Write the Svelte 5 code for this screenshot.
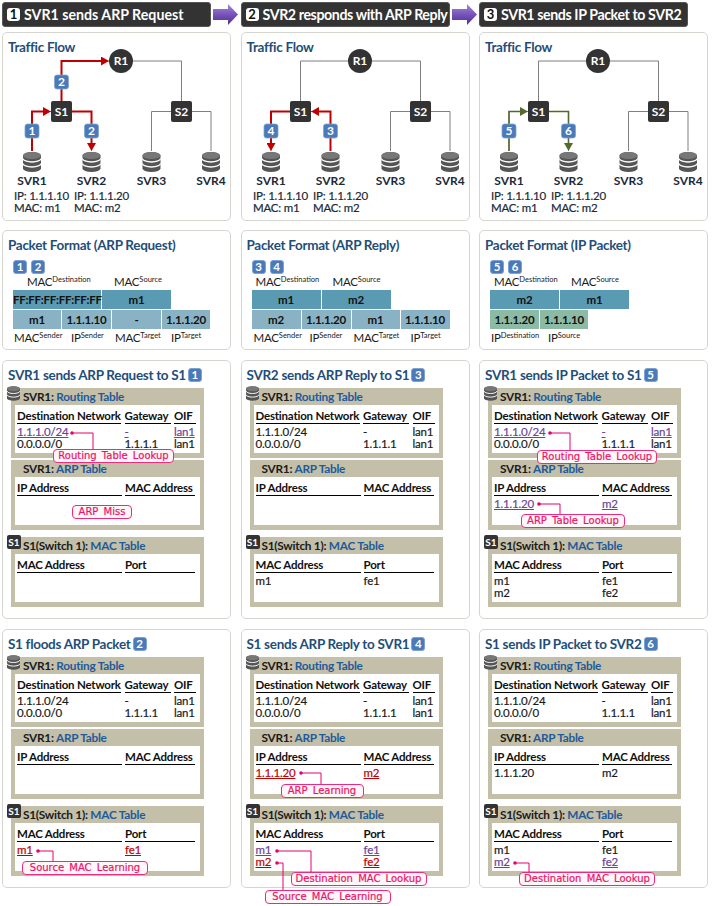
<script>
  const routes = [
    ['1.1.1.0/24', '-', 'lan1'],
    ['0.0.0.0/0', '1.1.1.1', 'lan1'],
  ];
  const hit = (t) => ({ t, c: 'hit' });
  const learned = (t) => ({ t, c: 'learned' });

  const grayLinks = [
    'M59.5 69V29H119',
    'M119 29H179.5V69',
    'M30 119V79.5H89.5V119',
    'M149.5 119V79.5H209V119',
  ];
  const servers = [
    { name: 'SVR1', x: 30, ip: '1.1.1.10', mac: 'm1', tx: 12 },
    { name: 'SVR2', x: 89.5, ip: '1.1.1.20', mac: 'm2', tx: 72 },
    { name: 'SVR3', x: 149.5 },
    { name: 'SVR4', x: 209 },
  ];

  const cols = [
    {
      step: 1,
      head: 'SVR1 sends ARP Request',
      track: 0,
      color: '#c00000',
      stroke: 2,
      flows: ['M30 119V79.5H46', 'M70 79.5H89.5V116', 'M59.5 69V29H104'],
      marks: [
        { n: 1, x: 30, y: 99 },
        { n: 2, x: 89.5, y: 99 },
        { n: 2, x: 59.5, y: 50 },
      ],
      packet: {
        title: 'Packet Format (ARP Request)',
        steps: [1, 2],
        top: [
          { t: 'FF:FF:FF:FF:FF:FF', w: 88 },
          { t: 'm1', w: 69 },
        ],
        topLabels: [
          { a: 'MAC', b: 'Destination', w: 87, x: 14 },
          { a: 'MAC', b: 'Source', w: 80 },
        ],
        bottom: [
          { t: 'm1', w: 48 },
          { t: '1.1.1.10', w: 49 },
          { t: '-', w: 49 },
          { t: '1.1.1.20', w: 48 },
        ],
        bottomLabels: [
          { a: 'MAC', b: 'Sender', w: 57, x: 1 },
          { a: 'IP', b: 'Sender', w: 44 },
          { a: 'MAC', b: 'Target', w: 56 },
          { a: 'IP', b: 'Target', w: 40 },
        ],
      },
      details: [
        {
          title: 'SVR1 sends ARP Request to S1',
          step: 1,
          routes: [[hit('1.1.1.0/24'), hit('-'), hit('lan1')], routes[1]],
          arp: [],
          mac: [],
          notes: [
            { t: 'Routing Table Lookup', x: 51, y: 89, w: 121, dx: 70, dy: 73, bend: 91 },
            { t: 'ARP Miss', x: 70, y: 145, w: 60 },
          ],
        },
        {
          title: 'S1 floods ARP Packet',
          step: 2,
          routes,
          arp: [],
          mac: [[learned('m1'), learned('fe1')]],
          notes: [
            { t: 'Source MAC Learning', x: 20, y: 232, w: 126, dx: 36, dy: 222, bend: 51 },
          ],
        },
      ],
    },
    {
      step: 2,
      head: 'SVR2 responds with ARP Reply',
      track: -0.4,
      color: '#c00000',
      stroke: 2,
      flows: ['M89.5 119V79.5H73', 'M49 79.5H30V116'],
      marks: [
        { n: 4, x: 30, y: 99 },
        { n: 3, x: 89.5, y: 99 },
      ],
      packet: {
        title: 'Packet Format (ARP Reply)',
        steps: [3, 4],
        top: [
          { t: 'm1', w: 69 },
          { t: 'm2', w: 69 },
        ],
        topLabels: [
          { a: 'MAC', b: 'Destination', w: 77, x: 4 },
          { a: 'MAC', b: 'Source', w: 80 },
        ],
        bottom: [
          { t: 'm2', w: 49 },
          { t: '1.1.1.20', w: 49 },
          { t: 'm1', w: 48 },
          { t: '1.1.1.10', w: 49 },
        ],
        bottomLabels: [
          { a: 'MAC', b: 'Sender', w: 56, x: 2 },
          { a: 'IP', b: 'Sender', w: 44 },
          { a: 'MAC', b: 'Target', w: 57 },
          { a: 'IP', b: 'Target', w: 40 },
        ],
      },
      details: [
        {
          title: 'SVR2 sends ARP Reply to S1',
          step: 3,
          routes,
          arp: [],
          mac: [['m1', 'fe1']],
          notes: [],
        },
        {
          title: 'S1 sends ARP Reply to SVR1',
          step: 4,
          routes,
          arp: [[learned('1.1.1.20'), learned('m2')]],
          mac: [
            [hit('m1'), hit('fe1')],
            [learned('m2'), learned('fe2')],
          ],
          notes: [
            { t: 'ARP Learning', x: 40, y: 155, w: 83, dx: 60, dy: 144, bend: 80 },
            { t: 'Source MAC Learning', x: 24, y: 261, w: 126, dx: 36, dy: 234, bend: 42 },
            { t: 'Destination MAC Lookup', x: 50, y: 243, w: 136, dx: 36, dy: 222, bend: 70 },
          ],
        },
      ],
    },
    {
      step: 3,
      head: 'SVR1 sends IP Packet to SVR2',
      track: -0.4,
      color: '#56692c',
      stroke: 1.6,
      flows: ['M30 119V79.5H46', 'M70 79.5H89.5V116'],
      marks: [
        { n: 5, x: 30, y: 99 },
        { n: 6, x: 89.5, y: 99 },
      ],
      packet: {
        title: 'Packet Format (IP Packet)',
        steps: [5, 6],
        top: [
          { t: 'm2', w: 69 },
          { t: 'm1', w: 69 },
        ],
        topLabels: [
          { a: 'MAC', b: 'Destination', w: 77, x: 4 },
          { a: 'MAC', b: 'Source', w: 80 },
        ],
        bottom: [
          { t: '1.1.1.20', w: 49, ip: true },
          { t: '1.1.1.10', w: 48, ip: true },
        ],
        bottomLabels: [
          { a: 'IP', b: 'Destination', w: 57, x: 1 },
          { a: 'IP', b: 'Source', w: 50 },
        ],
      },
      details: [
        {
          title: 'SVR1 sends IP Packet to S1',
          step: 5,
          routes: [[hit('1.1.1.0/24'), hit('-'), hit('lan1')], routes[1]],
          arp: [[hit('1.1.1.20'), hit('m2')]],
          mac: [
            ['m1', 'fe1'],
            ['m2', 'fe2'],
          ],
          notes: [
            { t: 'Routing Table Lookup', x: 58, y: 90, w: 120, dx: 71, dy: 73, bend: 91 },
            { t: 'ARP Table Lookup', x: 42, y: 154, w: 104, dx: 60, dy: 144, bend: 81 },
          ],
        },
        {
          title: 'S1 sends IP Packet to SVR2',
          step: 6,
          routes,
          arp: [['1.1.1.20', 'm2']],
          mac: [
            ['m1', 'fe1'],
            [hit('m2'), hit('fe2')],
          ],
          notes: [
            { t: 'Destination MAC Lookup', x: 40, y: 243, w: 136, dx: 36, dy: 234, bend: 50 },
          ],
        },
      ],
    },
  ];
</script>

{#snippet dbShape()}
  <path d="M0 3.5a9 3.5 0 0 1 18 0v13a9 3.5 0 0 1-18 0z" fill="#555" />
  <ellipse cx="9" cy="3.5" rx="9" ry="3.5" fill="#777" />
  <path d="M0 6.5a9 3.5 0 0 0 18 0M0 11.5a9 3.5 0 0 0 18 0" fill="none" stroke="#fff" stroke-width="1.3" />
{/snippet}

{#snippet badge(n)}
  <span class="badge">{n}</span>
{/snippet}

{#snippet grid(kind, head, rows)}
  <div class="tbl {kind}">
    {#each head as h}
      <div class="th">{h}</div>
    {/each}
    {#each rows as row}
      {#each row as cell}
        {#if typeof cell === 'string'}
          <div class="td">{cell}</div>
        {:else}
          <div class="td"><span class={cell.c}>{cell.t}</span></div>
        {/if}
      {/each}
    {/each}
  </div>
{/snippet}

{#snippet labels(list)}
  <div class="plabels">
    {#each list as l}
      <span class="plabel" style="width:{l.w}px;margin-left:{l.x ?? 0}px">{l.a}<sup>{l.b}</sup></span>
    {/each}
  </div>
{/snippet}

<div class="page">
  {#each cols as col, ci}
    <section class="col">
      <div class="top">
        <header class="head"><span class="head-num">{col.step}</span><span style="letter-spacing:{col.track}px">{col.head}</span></header>
        {#if ci < 2}
          <svg class="next" width="26" height="24" viewBox="0 0 26 24">
            <defs>
              <linearGradient id="arrow-{ci}" x1="0" y1="0" x2="0" y2="1">
                <stop offset="0" stop-color="#a48bd6" />
                <stop offset="0.45" stop-color="#7a58bd" />
                <stop offset="1" stop-color="#4d2f91" />
              </linearGradient>
            </defs>
            <path d="M0 6h15V1l10 10.5L15 22v-5H0z" fill="url(#arrow-{ci})" />
          </svg>
        {/if}
      </div>

      <div class="card flow">
        <h2>Traffic Flow</h2>
        <svg class="topo" width="227" height="187" viewBox="1 1 227 187">
          <defs>
            <marker id="tip-{ci}" markerUnits="userSpaceOnUse" markerWidth="8" markerHeight="9" refX="5" refY="4.5" orient="auto">
              <path d="M0 0L8 4.5L0 9z" fill={col.color} />
            </marker>
          </defs>
          {#each grayLinks as d}
            <path {d} class="link" />
          {/each}
          {#each col.flows as d}
            <path {d} fill="none" stroke={col.color} stroke-width={col.stroke} marker-end="url(#tip-{ci})" />
          {/each}

          <circle cx="119" cy="29" r="12" fill="#333" />
          <text x="119" y="33" class="node">R1</text>
          <rect x="49" y="69" width="21" height="21" rx="2" fill="#333" />
          <text x="59.5" y="84" class="node">S1</text>
          <rect x="169" y="69" width="21" height="21" rx="2" fill="#333" />
          <text x="179.5" y="84" class="node">S2</text>

          {#each col.marks as m}
            <rect x={m.x - 7} y={m.y - 7} width="14" height="14" rx="2.5" fill="#4a7ab8" stroke="#7ea3d3" stroke-width="0.8" />
            <text x={m.x} y={m.y + 4.2} class="mark">{m.n}</text>
          {/each}

          {#each servers as s}
            <g transform="translate({s.x - 9} 120)">{@render dbShape()}</g>
            <text x={s.x} y="153" class="svr">{s.name}</text>
            {#if s.ip}
              <text x={s.tx} y="168" class="addr">IP: {s.ip}</text>
              <text x={s.tx} y="180" class="addr">MAC: {s.mac}</text>
            {/if}
          {/each}
        </svg>
      </div>

      <div class="card packet">
        <h2>{col.packet.title}</h2>
        <div class="pbadges">
          {#each col.packet.steps as n}
            {@render badge(n)}
          {/each}
        </div>
        {@render labels(col.packet.topLabels)}
        <div class="cells">
          {#each col.packet.top as c}
            <div class="cell mac" style="width:{c.w}px">{c.t}</div>
          {/each}
        </div>
        <div class="cells">
          {#each col.packet.bottom as c}
            <div class="cell" class:ip={c.ip} style="width:{c.w}px">{c.t}</div>
          {/each}
        </div>
        {@render labels(col.packet.bottomLabels)}
      </div>

      {#each col.details as d}
        <div class="card detail">
          <h2>{d.title}{@render badge(d.step)}</h2>

          <div class="panel">
            <svg class="panel-icon" width="13" height="15" viewBox="0 0 18 20">{@render dbShape()}</svg>
            <h3>SVR1: <em>Routing Table</em></h3>
            <div class="sheet">
              {@render grid('three', ['Destination Network', 'Gateway', 'OIF'], d.routes)}
            </div>
          </div>

          <div class="panel arp">
            <h3>SVR1: <em>ARP Table</em></h3>
            <div class="sheet">
              {@render grid('two', ['IP Address', 'MAC Address'], d.arp)}
            </div>
          </div>

          <div class="panel mac-panel">
            <span class="s1-icon">S1</span>
            <h3>S1(Switch 1): <em>MAC Table</em></h3>
            <div class="sheet">
              {@render grid('two', ['MAC Address', 'Port'], d.mac)}
            </div>
          </div>

          {#each d.notes as note}
            {#if note.bend}
              <svg class="leader" width="229" height="280" viewBox="0 0 229 280">
                <path d="M{note.dx} {note.dy}H{note.bend}V{note.y}" fill="none" stroke="#e6006e" stroke-width="1" />
                <circle cx={note.dx} cy={note.dy} r="1.8" fill="#e6006e" />
              </svg>
            {/if}
            <div class="note" style="left:{note.x}px;top:{note.y}px;width:{note.w}px">{note.t}</div>
          {/each}
        </div>
      {/each}
    </section>
  {/each}
</div>

<style>
  :global(body) {
    background: #fff;
    color: #111;
    font-family: Lato, "Liberation Sans", sans-serif;
  }

  .page {
    display: grid;
    grid-template-columns: repeat(3, 229px);
    column-gap: 9.5px;
    align-content: start;
    min-height: 904px;
    padding: 2px 0 0 2px;
  }

  .col {
    display: flex;
    flex-direction: column;
    min-width: 0;
  }

  .top {
    display: flex;
    align-items: center;
    gap: 2px;
    height: 25px;
  }

  .head {
    flex: 0 0 209px;
    box-sizing: border-box;
    height: 25px;
    display: flex;
    align-items: center;
    gap: 4px;
    padding-left: 4px;
    background: #333;
    border: 1px solid #555;
    border-radius: 3px;
    color: #fff;
    font-size: 14.2px;
    font-weight: 700;
    white-space: nowrap;
  }

  .head-num {
    width: 13px;
    height: 13px;
    border-radius: 3px;
    background: #fff;
    color: #111;
    font-size: 13px;
    line-height: 13px;
    text-align: center;
  }

  .next {
    flex-shrink: 0;
  }

  .card {
    position: relative;
    box-sizing: border-box;
    border: 1px solid #d6d6d0;
    border-radius: 5px;
    background: #fff;
  }

  .flow {
    height: 189px;
    margin-top: 5px;
    display: grid;
  }

  .flow > * {
    grid-area: 1 / 1;
  }

  .packet {
    height: 120px;
    margin-top: 9px;
  }

  .detail {
    height: 259px;
    margin-top: 10px;
  }

  h2 {
    margin: 0;
    padding: 5px 0 0 5px;
    font-size: 13.5px;
    letter-spacing: -0.3px;
    line-height: 18px;
    font-weight: 700;
    color: #1f4e79;
    white-space: nowrap;
  }

  .topo text {
    font-family: Lato, "Liberation Sans", sans-serif;
  }

  .link {
    fill: none;
    stroke: #7f7f7f;
    stroke-width: 1;
  }

  .node {
    fill: #fff;
    font-size: 12px;
    font-weight: 700;
    text-anchor: middle;
  }

  .mark {
    fill: #fff;
    font-size: 12px;
    font-weight: 700;
    text-anchor: middle;
  }

  .svr {
    fill: #1a2a3a;
    font-size: 12px;
    font-weight: 700;
    text-anchor: middle;
  }

  .addr {
    fill: #1a2a3a;
    font-size: 11.5px;
    letter-spacing: -0.2px;
    stroke: #1a2a3a;
    stroke-width: 0.2px;
  }

  .badge {
    display: inline-block;
    box-sizing: border-box;
    width: 14px;
    height: 14px;
    margin-left: 2px;
    border-radius: 3px;
    background: #4a7ab8;
    border: 1px solid #7ea3d3;
    color: #fff;
    font-size: 11.5px;
    letter-spacing: 0;
    line-height: 12px;
    font-weight: 700;
    text-align: center;
    vertical-align: 1px;
  }

  .pbadges {
    display: flex;
    gap: 2px;
    height: 14px;
    margin: 6px 0 0 8px;
  }

  .plabels {
    display: flex;
    margin-left: 10px;
    height: 16px;
    font-size: 11.5px;
    letter-spacing: -0.2px;
    line-height: 16px;
    color: #1a1a1a;
    white-space: nowrap;
  }

  .plabel sup {
    font-size: 7.5px;
    letter-spacing: 0;
    line-height: 0;
    vertical-align: 4px;
  }

  .cells {
    display: flex;
    gap: 1px;
    margin: 0 0 1px 10px;
  }

  .cell {
    height: 19px;
    flex-shrink: 0;
    background: #8ab2c5;
    color: #111;
    font-size: 11.5px;
    letter-spacing: -0.2px;
    line-height: 19px;
    font-weight: 700;
    text-align: center;
    white-space: nowrap;
  }

  .cell.mac {
    background: #5b9ab3;
  }

  .cell.ip {
    background: #8cbaa5;
  }

  .panel {
    position: relative;
    box-sizing: border-box;
    width: 193px;
    height: 70px;
    margin: 4px 0 0 8px;
    padding: 0 4px;
    background: #c3bfa9;
  }

  .arp {
    margin-top: 2px;
  }

  .mac-panel {
    margin-top: 7px;
  }

  .panel-icon {
    position: absolute;
    left: -4px;
    top: -2px;
  }

  .s1-icon {
    position: absolute;
    left: -4px;
    top: -2px;
    width: 14px;
    height: 14px;
    border-radius: 2px;
    background: #333;
    color: #fff;
    font-size: 10px;
    line-height: 14px;
    font-weight: 700;
    text-align: center;
  }

  h3 {
    margin: 0;
    padding-left: 8px;
    height: 17px;
    font-size: 11.8px;
    letter-spacing: -0.25px;
    line-height: 17px;
    font-weight: 700;
    color: #1a1a1a;
    white-space: nowrap;
  }

  h3 em {
    font-style: normal;
    color: #1f5a9a;
  }

  .sheet {
    height: 48px;
    padding: 0 2px;
    background: #fff;
    box-sizing: border-box;
  }

  .tbl {
    display: grid;
    font-size: 11.5px;
    letter-spacing: -0.2px;
    white-space: nowrap;
  }

  .three {
    grid-template-columns: 104px 46px 22px;
    column-gap: 3.5px;
  }

  .two {
    grid-template-columns: 105px 70px;
    column-gap: 3px;
  }

  .th {
    height: 19px;
    box-sizing: border-box;
    padding-top: 3px;
    line-height: 15px;
    font-weight: 700;
    border-bottom: 1px solid #000;
    margin-bottom: 2px;
  }

  .td {
    height: 11.5px;
    line-height: 11.5px;
    color: #1a1a1a;
    -webkit-text-stroke: 0.2px currentColor;
  }

  .hit {
    color: #6a4596;
    text-decoration: underline;
  }

  .learned {
    color: #c00000;
    text-decoration: underline;
  }

  .leader {
    position: absolute;
    left: -1px;
    top: -1px;
    pointer-events: none;
    overflow: visible;
  }

  .note {
    position: absolute;
    box-sizing: border-box;
    height: 14px;
    margin: -1px 0 0 -1px;
    background: #fff6f9;
    border: 1px solid #ee2a7b;
    border-radius: 4px;
    color: #ee1166;
    font-family: "DejaVu Sans", sans-serif;
    font-size: 10px;
    word-spacing: 2px;
    line-height: 12px;
    -webkit-text-stroke: 0.2px currentColor;
    text-align: center;
    white-space: nowrap;
  }
</style>
